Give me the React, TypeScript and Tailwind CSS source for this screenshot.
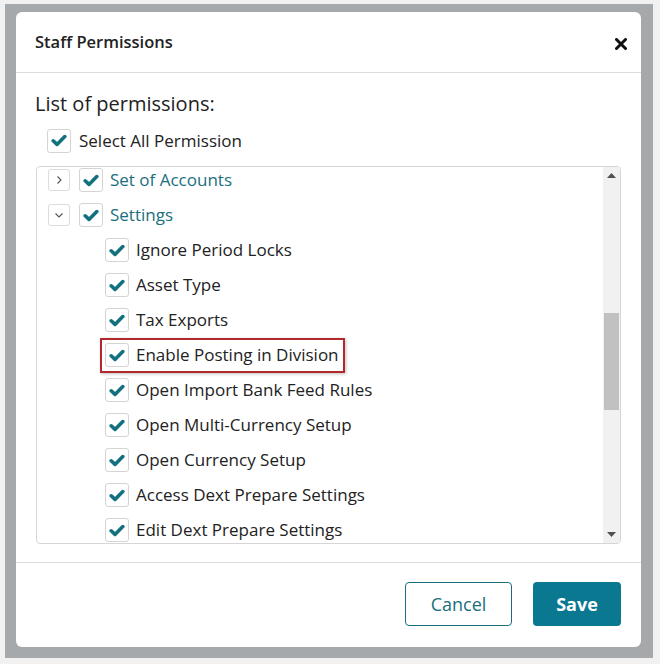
const teal = "#12707f";

const Check = () => (
  <span className="flex h-[24px] w-[24px] shrink-0 items-center justify-center rounded-[3px] border border-[#d4d4d4] bg-white">
    <svg width="16" height="13" viewBox="0 0 16 13">
      <path d="M2.2 6.8 L6 10.4 L13.8 2.6" fill="none" stroke={teal} strokeWidth="3.6" strokeLinecap="round" strokeLinejoin="round" />
    </svg>
  </span>
);

const Toggle = ({ open }: { open: boolean }) => (
  <span className="flex h-[22px] w-[22px] shrink-0 items-center justify-center rounded-[3px] border border-[#dcdcdc] bg-white">
    {open ? (
      <svg width="10" height="10" viewBox="0 0 10 10">
        <path d="M1.5 3.5 L5 7 L8.5 3.5" fill="none" stroke="#555" strokeWidth="1.1" />
      </svg>
    ) : (
      <svg width="10" height="10" viewBox="0 0 10 10">
        <path d="M3.5 1.5 L7 5 L3.5 8.5" fill="none" stroke="#555" strokeWidth="1.1" />
      </svg>
    )}
  </span>
);

const children = [
  "Ignore Period Locks",
  "Asset Type",
  "Tax Exports",
  "Enable Posting in Division",
  "Open Import Bank Feed Rules",
  "Open Multi-Currency Setup",
  "Open Currency Setup",
  "Access Dext Prepare Settings",
  "Edit Dext Prepare Settings",
];

const App = () => {
  return (
    <div className="h-[664px] w-[660px] overflow-hidden bg-[#f1f1f1] pl-[5px] pt-[4px] font-['Open_Sans',sans-serif]">
      <div className="h-[654px] w-[648px] bg-[#a6a9ab] pl-[11px] pt-[8px]">
        <div className="flex h-[635px] w-[625px] flex-col rounded-[6px] bg-white">
          {/* header */}
          <div className="flex h-[61px] items-center justify-between border-b border-[#dcdcdc] pl-[19px] pr-[14px]">
            <span className="text-[16.5px] font-semibold text-[#222]">Staff Permissions</span>
            <svg width="12" height="12" viewBox="0 0 12 12" className="mt-[3px]">
              <path d="M1.5 1.5 L10.5 10.5 M10.5 1.5 L1.5 10.5" stroke="#111" strokeWidth="3" strokeLinecap="round" />
            </svg>
          </div>

          {/* body */}
          <div className="flex h-[490px] flex-col border-b border-[#dcdcdc] px-[20px] pt-[18px]">
            <h2 className="ml-[-1px] text-[20px] font-medium leading-[26px] text-[#222]">List of permissions:</h2>
            <div className="mt-[11px] ml-[11px] flex items-center gap-[8px]">
              <Check />
              <span className="text-[17px] font-medium text-[#222]">Select All Permission</span>
            </div>

            <div className="mt-[12px] flex h-[378px] overflow-hidden rounded-[4px] border border-[#d6d6d6]">
              <div className="mt-[-4px] flex-1">
                <div className="flex h-[35px] items-center pl-[11px]">
                  <Toggle open={false} />
                  <span className="ml-[9px]"><Check /></span>
                  <span className="ml-[7px] text-[17px] font-medium text-[#1a6f7e]">Set of Accounts</span>
                </div>
                <div className="flex h-[35px] items-center pl-[11px]">
                  <Toggle open={true} />
                  <span className="ml-[9px]"><Check /></span>
                  <span className="ml-[7px] text-[17px] font-medium text-[#1a6f7e]">Settings</span>
                </div>
                {children.map((name) =>
                  name === "Enable Posting in Division" ? (
                    <div key={name} className="flex h-[35px] items-center pl-[63px]">
                      <div className="flex h-[35px] items-center gap-[7px] border-2 border-[#b3282d] pl-[3px] pr-[4px] shadow-[1px_1px_3px_rgba(0,0,0,0.25)]">
                        <Check />
                        <span className="text-[17px] font-medium text-[#222]">{name}</span>
                      </div>
                    </div>
                  ) : (
                    <div key={name} className="flex h-[35px] items-center gap-[7px] pl-[68px]">
                      <Check />
                      <span className="text-[17px] font-medium text-[#222]">{name}</span>
                    </div>
                  )
                )}
              </div>

              {/* scrollbar */}
              <div className="flex w-[17px] flex-col items-center bg-[#f1f1f1]">
                <div className="flex h-[17px] items-center justify-center">
                  <svg width="9" height="5" viewBox="0 0 9 5"><path d="M0 5 L4.5 0 L9 5 Z" fill="#505050" /></svg>
                </div>
                <div className="mt-[129px] h-[97px] w-[15px] bg-[#c1c1c1]" />
                <div className="flex-1" />
                <div className="flex h-[17px] items-center justify-center">
                  <svg width="9" height="5" viewBox="0 0 9 5"><path d="M0 0 L9 0 L4.5 5 Z" fill="#505050" /></svg>
                </div>
              </div>
            </div>
          </div>

          {/* footer */}
          <div className="flex flex-1 items-start justify-end gap-[21px] pr-[20px] pt-[19px]">
            <button className="h-[44px] w-[107px] rounded-[4px] border border-[#1a6f7e] bg-white text-[18px] font-medium text-[#1a6f7e]">
              Cancel
            </button>
            <button className="h-[44px] w-[88px] rounded-[4px] bg-[#0b7892] text-[18px] font-bold text-white">
              Save
            </button>
          </div>
        </div>
      </div>
    </div>
  );
};

export default App;
